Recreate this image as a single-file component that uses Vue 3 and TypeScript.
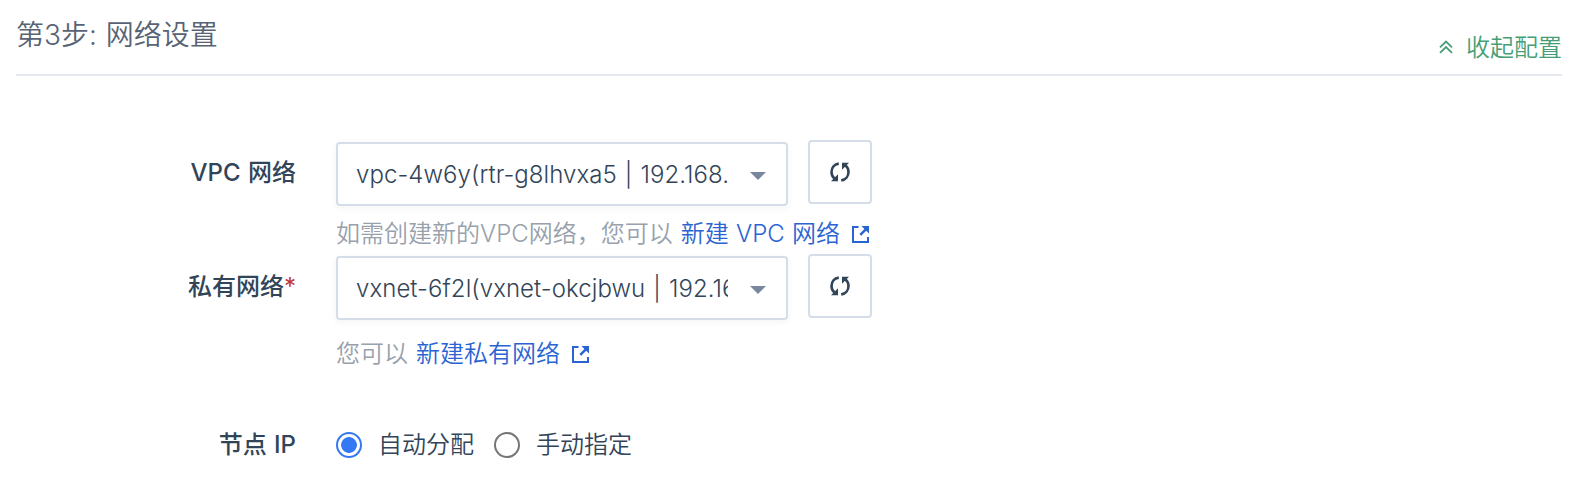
<script setup lang="ts">
import { ref } from 'vue'

interface NetworkField {
  id: string
  label: string
  required: boolean
  value: string
  hint: string
  link: string
}

const fields: NetworkField[] = [
  {
    id: 'vpc',
    label: 'VPC 网络',
    required: false,
    value: 'vpc-4w6y(rtr-g8lhvxa5 | 192.168.',
    hint: '如需创建新的VPC网络，您可以',
    link: '新建 VPC 网络',
  },
  {
    id: 'vxnet',
    label: '私有网络',
    required: true,
    value: 'vxnet-6f2l(vxnet-okcjbwu | 192.16',
    hint: '您可以',
    link: '新建私有网络',
  },
]

const modes = [
  { id: 'auto', label: '自动分配' },
  { id: 'manual', label: '手动指定' },
]
const mode = ref('auto')
</script>

<template>
  <section class="panel">
    <header class="head">
      <h2 class="title">第3步: 网络设置</h2>
      <a class="collapse">
        <svg class="chevrons" width="14" height="14" viewBox="0 0 14 14">
          <path d="M1 7.3 7 1.5l6 5.8M1 12.8 7 7l6 5.8" fill="none" stroke="currentColor" stroke-width="1.8" />
        </svg>
        <span>收起配置</span>
      </a>
    </header>

    <div v-for="f in fields" :key="f.id" class="row" :class="f.id">
      <div class="label">{{ f.label }}<span v-if="f.required" class="star">*</span></div>
      <div class="field">
        <div class="controls">
          <div class="select">
            <span class="value">{{ f.value }}</span>
            <svg class="caret" width="16" height="8" viewBox="0 0 16 8"><path d="M0 0h16L8 8z" fill="#79879c" /></svg>
          </div>
          <button class="refresh" type="button">
            <svg width="20" height="20" viewBox="0 0 20 20">
              <path d="M8.800 1.600C4.400 2.200 1.500 5.800 1.500 10c0 2.600 1 4.800 3 6.400" fill="none" stroke="#324558" stroke-width="2.600" />
              <path d="M1 19.300h7v-7z" fill="#324558" />
              <path d="M11.200 18.400C15.600 17.800 18.500 14.200 18.500 10c0-2.600-1-4.800-3-6.400" fill="none" stroke="#324558" stroke-width="2.600" />
              <path d="M19 .7h-7v7z" fill="#324558" />
            </svg>
          </button>
        </div>
        <div class="hint">
          <span class="hint-text">{{ f.hint }}</span>
          <a class="link">{{ f.link }}</a>
          <svg class="external" width="17" height="17" viewBox="0 0 17 17">
            <path d="M6.500 1H1v15h15v-5" fill="none" stroke="currentColor" stroke-width="2" />
            <path d="M9.500 0H17v7.500l-2.800-2.800-5 5-1.800-1.800 5-5z" fill="currentColor" />
          </svg>
        </div>
      </div>
    </div>

    <div class="row node">
      <div class="label">节点 IP</div>
      <div class="radios">
        <label v-for="m in modes" :key="m.id" class="option" @click="mode = m.id">
          <span class="dot" :class="{ on: mode === m.id }"></span>
          <span>{{ m.label }}</span>
        </label>
      </div>
    </div>
  </section>
</template>

<style>
body {
  background: #fff;
}
</style>

<style scoped>
.panel {
  box-sizing: border-box;
  width: 1574px;
  height: 496px;
  padding: 0 12px 0 16px;
  overflow: hidden;
  font: 24px/36px Inter, "Noto Sans CJK SC", sans-serif;
  font-weight: 350;
  color: #324558;
}
.head {
  box-sizing: border-box;
  height: 76px;
  display: flex;
  justify-content: space-between;
  border-bottom: 2px solid #e3e8f1;
}
.title {
  margin: 15px 0 0;
  font-size: 28px;
  line-height: 40px;
  font-weight: 350;
  word-spacing: 1px;
  color: #576375;
}
.collapse {
  display: flex;
  align-items: center;
  gap: 13px;
  height: 36px;
  margin-top: 30px;
  color: #479e76;
}
.chevrons {
  margin-top: -2px;
}
.row {
  display: grid;
  grid-template-columns: 280px 1fr;
  column-gap: 40px;
}
.vpc {
  margin-top: 64px;
  height: 114px;
}
.vxnet {
  height: 173px;
}
.label {
  height: 64px;
  line-height: 65px;
  text-align: right;
  font-weight: 500;
  word-spacing: 1px;
}
.star {
  color: #bd3633;
  font-weight: 400;
}
.controls {
  display: flex;
  gap: 20px;
}
.select {
  box-sizing: border-box;
  display: flex;
  align-items: center;
  justify-content: space-between;
  width: 452px;
  height: 64px;
  margin-top: 2px;
  padding: 0 20px 0 18px;
  border: 2px solid #d5dde9;
  border-radius: 4px;
  box-shadow: 0 2px 6px rgba(50, 69, 88, 0.06);
}
.value {
  width: 372px;
  padding-top: 1px;
  overflow: hidden;
  white-space: nowrap;
  font-weight: 300;
  letter-spacing: 0.06px;
  word-spacing: 1.2px;
}
.caret {
  margin-top: 4px;
}
.refresh {
  box-sizing: border-box;
  display: flex;
  align-items: center;
  justify-content: center;
  width: 64px;
  height: 64px;
  padding: 0;
  background: #fff;
  border: 2px solid #d5dde9;
  border-radius: 4px;
}
.hint {
  display: flex;
  align-items: center;
  height: 36px;
  margin-top: 10px;
  white-space: nowrap;
}
.vxnet .hint {
  margin-top: 16px;
}
.hint-text {
  color: #98a1ac;
}
.link {
  margin-left: 8px;
  word-spacing: 0.6px;
  color: #2b63d3;
}
.external {
  margin-left: 12px;
  color: #2b63d3;
}
.node .label,
.radios {
  height: 36px;
  line-height: 36px;
}
.radios {
  display: flex;
  gap: 20px;
}
.option {
  display: flex;
  align-items: center;
  gap: 16px;
}
.dot {
  box-sizing: border-box;
  width: 26px;
  height: 26px;
  border: 2px solid #767676;
  border-radius: 50%;
}
.dot.on {
  border-color: #3478f6;
  background: radial-gradient(circle, #3478f6 7.500px, #fff 8.200px);
}
</style>
